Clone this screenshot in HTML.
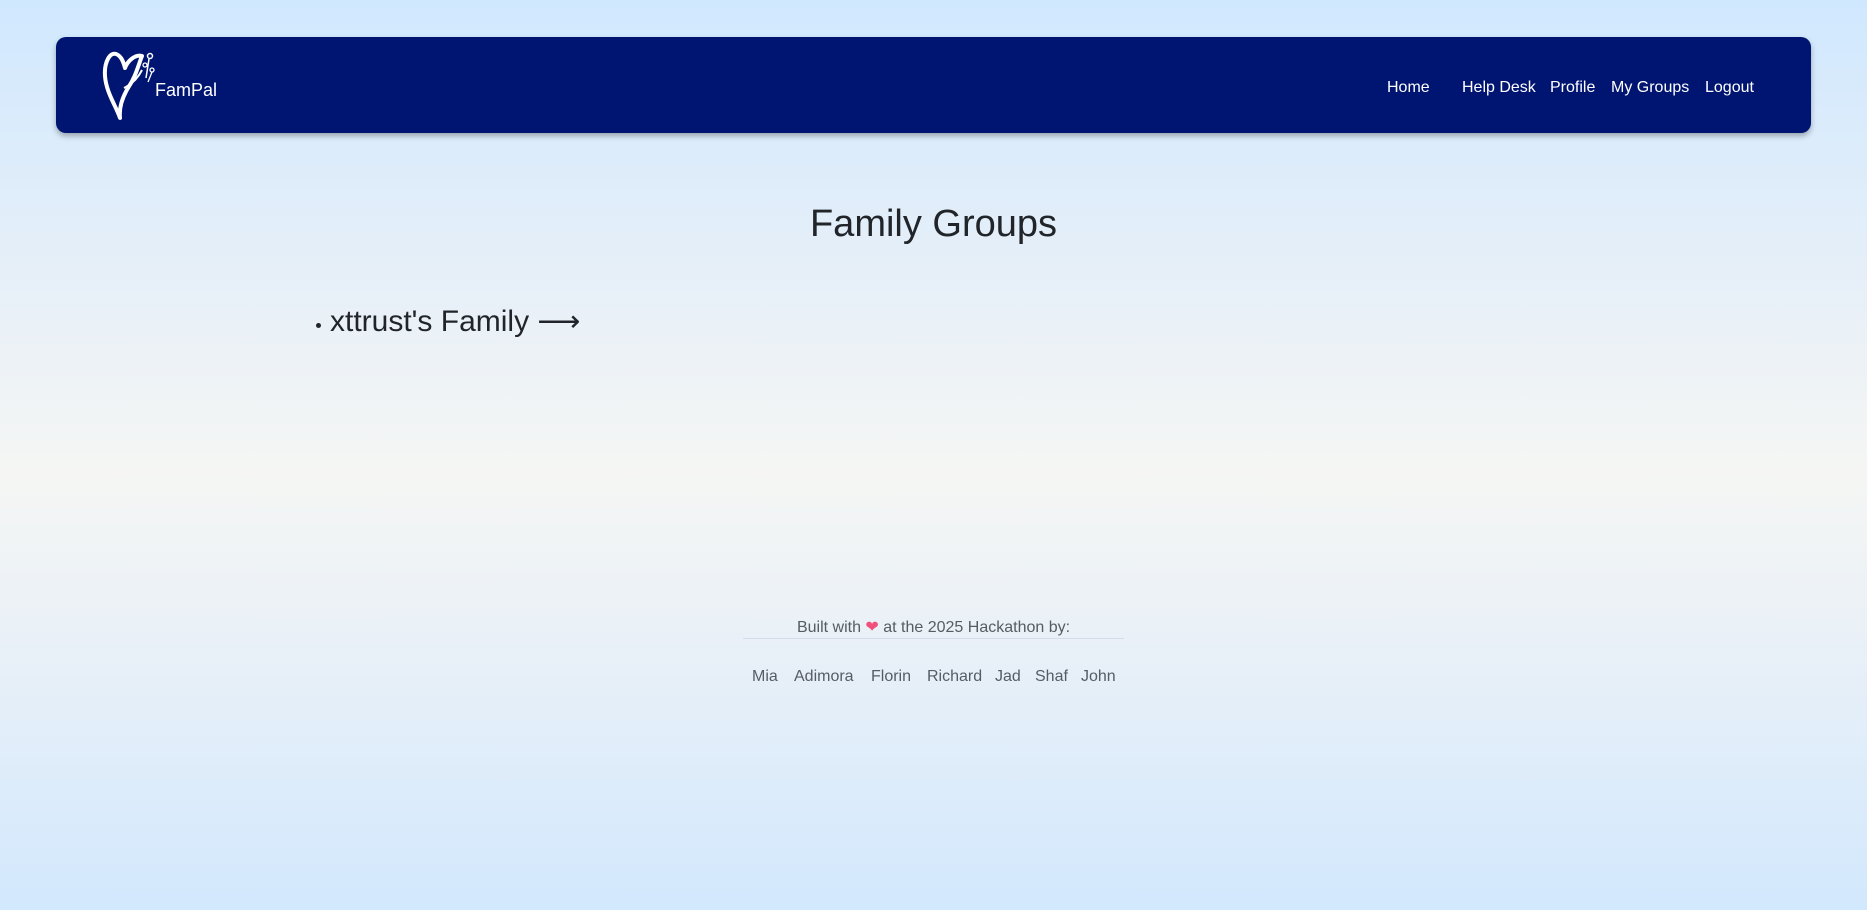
<!DOCTYPE html>
<html><head><meta charset="utf-8"><style>
html,body{margin:0;padding:0;}
body{width:1867px;height:910px;overflow:hidden;font-family:"Liberation Sans",sans-serif;
background:linear-gradient(180deg,#d0e8fe 0%,#e6eff8 30%,#f5f6f4 52%,#e6eff8 75%,#d2e8fd 100%);position:relative;}
.nav{position:absolute;left:56px;top:37px;width:1755px;height:96px;background:#001571;border-radius:10px;box-shadow:0 3px 6px rgba(0,0,0,.3);}
.brand{position:absolute;left:155px;top:80px;color:#fff;font-size:18px;}
.links{position:absolute;top:79px;color:#fff;font-size:16px;}
h1{position:absolute;left:0;width:1867px;text-align:center;top:203px;margin:0;font-weight:normal;font-size:38px;color:#212529;}
.item{position:absolute;left:330px;top:304px;font-size:30px;color:#212529;}
.dot{position:absolute;left:316px;top:323px;width:5px;height:5px;border-radius:50%;background:#212529;}
.built{position:absolute;left:0;width:1867px;text-align:center;top:617px;font-size:16px;color:#555c63;}
.line{position:absolute;left:743px;width:381px;top:638px;height:1px;background:#d3dde6;}
.names{position:absolute;top:668px;font-size:16px;color:#555c63;}
</style></head><body>
<div class="nav"></div>
<svg style="position:absolute;left:102px;top:48px" width="56" height="74" viewBox="0 0 56 74">
<path d="M18 70 C14 58 4 44 3 28 C2 14 8 4 14 6 C20 8 22 16 23 20 C26 12 34 6 40 8 C36 18 34 28 26 40 C20 50 17 60 18 70 Z" fill="none" stroke="#fff" stroke-width="4" stroke-linejoin="round"/>
<path d="M22 40 C30 36 36 30 40 22" stroke="#fff" stroke-width="2" fill="none"/>
<circle cx="48" cy="8" r="2.5" fill="none" stroke="#fff" stroke-width="1.5"/>
<path d="M47 11 L44 30" stroke="#fff" stroke-width="1.5"/>
<circle cx="43" cy="17" r="2" fill="none" stroke="#fff" stroke-width="1.3"/>
<circle cx="50" cy="22" r="2" fill="none" stroke="#fff" stroke-width="1.3"/>
<path d="M50 24 L46 34" stroke="#fff" stroke-width="1.3"/>
</svg>
<div class="brand">FamPal</div>
<div class="links" style="left:1387px">Home</div>
<div class="links" style="left:1462px">Help Desk</div>
<div class="links" style="left:1550px">Profile</div>
<div class="links" style="left:1611px">My Groups</div>
<div class="links" style="left:1705px">Logout</div>
<h1>Family Groups</h1>
<div class="dot"></div>
<div class="item">xttrust's Family ⟶</div>
<div class="built">Built with <span style="color:#f0507a">❤</span> at the 2025 Hackathon by:</div>
<div class="line"></div>
<div class="names" style="left:752px">Mia</div>
<div class="names" style="left:794px">Adimora</div>
<div class="names" style="left:871px">Florin</div>
<div class="names" style="left:927px">Richard</div>
<div class="names" style="left:995px">Jad</div>
<div class="names" style="left:1035px">Shaf</div>
<div class="names" style="left:1081px">John</div>
</body></html>
